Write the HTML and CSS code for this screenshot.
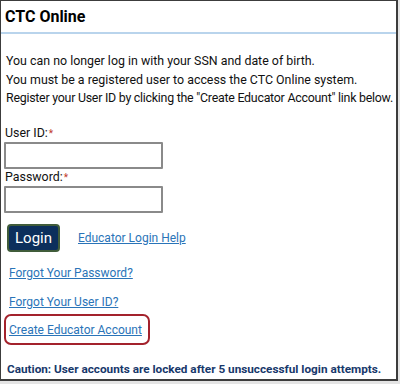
FILE: index.html
```html
<!DOCTYPE html>
<html lang="en">
  <head>
    <meta charset="UTF-8" />
    <meta name="viewport" content="width=device-width, initial-scale=1.0" />
    <title>CTC Online</title>
    <link rel="stylesheet" href="styles.css">
  </head>
  <body>
    <div class="frame">
      <div class="header">
        <h2>CTC Online</h2>
      </div>
      <div class="content">
        <p class="intro">
          You can no longer log in with your SSN and date of birth.<br />
          You must be a registered user to access the CTC Online system.<br />
          <span class="tight">Register your User ID by clicking the "Create Educator Account" link below.</span>
        </p>
        <form id="loginForm">
          <label for="userid">User ID:<span class="req">*</span></label>
          <input type="text" id="userid" name="userid" />
          <label for="password">Password:<span class="req">*</span></label>
          <input type="password" id="password" name="password" />
          <div class="actions">
            <button type="submit">Login</button>
            <a href="#">Educator Login Help</a>
          </div>
        </form>
        <div class="links">
          <a href="#">Forgot Your Password?</a>
          <a href="#">Forgot Your User ID?</a>
          <div class="highlight">
            <a href="#">Create Educator Account</a>
          </div>
        </div>
        <p class="caution">Caution: User accounts are locked after 5 unsuccessful login attempts.</p>
      </div>
    </div>
  </body>
</html>
```

FILE: styles.css
```css
body {
  margin: 0;
  background-color: #e4e4e4;
  font-family: Roboto, "Liberation Sans", sans-serif;
  font-size: 12px;
  color: #111;
}

.frame {
  width: 395px;
  height: 378px;
  background-color: white;
  border: 1px solid #3c3c3c;
  border-right-width: 2px;
  border-bottom-width: 2px;
  overflow: hidden;
}

.header {
  height: 31px;
  border-bottom: 2px solid #b9d4ec;
}

.header h2 {
  margin: 0;
  padding: 6px 0 0 4px;
  font-size: 16px;
  font-weight: bold;
  color: #000;
}

.content {
  padding: 0 3px;
}

.intro {
  margin: 18px 0 0 2px;
  font-size: 12.4px;
  line-height: 18.5px;
  white-space: nowrap;
}

.tight {
  letter-spacing: -0.25px;
}

form {
  margin-top: 17px;
}

label {
  display: block;
  margin-left: 1px;
  font-size: 12.4px;
  line-height: 16px;
}

.req {
  color: #c0392b;
  font-size: 10px;
  margin-left: 1px;
}

input[type="text"],
input[type="password"] {
  display: block;
  box-sizing: border-box;
  width: 159px;
  height: 27px;
  margin: 0;
  border: 2px solid #8a8a8a;
  border-radius: 1px;
}

.actions {
  display: flex;
  align-items: center;
  gap: 18px;
  margin-top: 11px;
}

button {
  height: 28px;
  padding: 0 6px;
  margin-left: 3px;
  background-color: #0c2f5c;
  color: white;
  font-family: Roboto, "Liberation Sans", sans-serif;
  font-size: 15px;
  border: 2px solid #405c3a;
  border-radius: 4px;
}

a {
  color: #2a74b8;
  text-decoration: underline;
  line-height: 16px;
}

.links {
  display: flex;
  flex-direction: column;
  align-items: flex-start;
  gap: 13px;
  margin-top: 13px;
  padding-left: 5px;
}

.highlight {
  margin: -9px 0 0 -5px;
  padding: 6px 6px 5px 3px;
  border: 2px solid #a3222c;
  border-radius: 7px;
}

.caution {
  margin: 16px 0 0 3px;
  font-size: 11.75px;
  line-height: 16px;
  font-weight: bold;
  color: #17386b;
}
```
